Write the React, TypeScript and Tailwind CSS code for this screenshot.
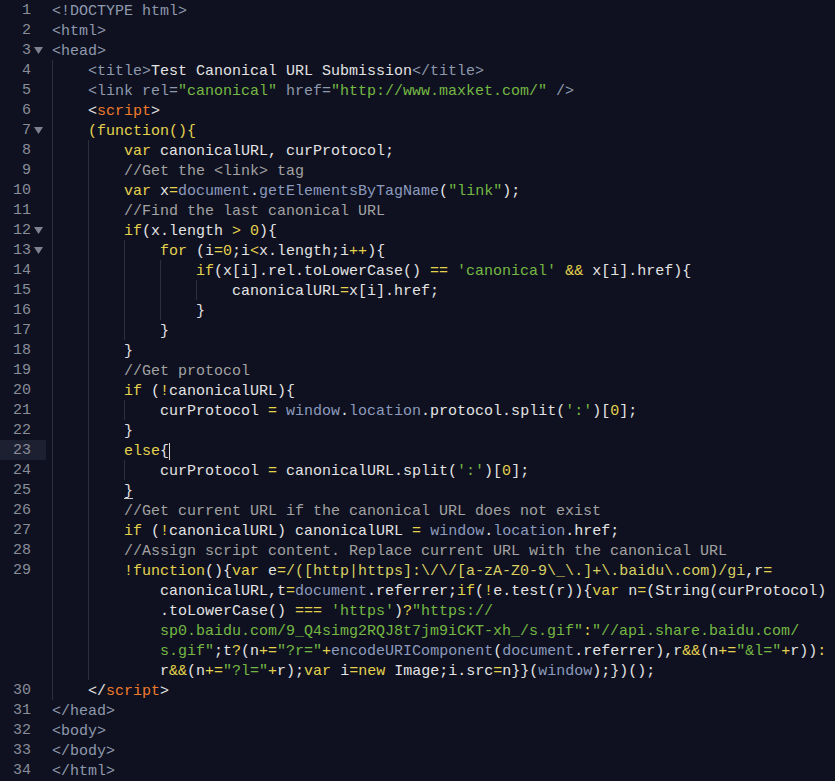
import React from "react";

type Seg = [string, keyof typeof COLORS];

type Row = {
  num?: number;
  fold?: boolean;
  guides: number;
  pad?: number;
  segs: Seg[];
  active?: boolean;
};

const COLORS = {
  p: "text-[#e3e3e3]",
  k: "text-[#e4d24e]",
  s: "text-[#74b843]",
  c: "text-[#a2a2a2]",
  t: "text-[#8e99ad]",
  b: "text-[#8c9bbd]",
  o: "text-[#ee7b2c]",
  r: "text-[#d8cf62]",
};

const rows: Row[] = [
  { num: 1, guides: 0, segs: [["<!DOCTYPE html>", "t"]] },
  { num: 2, guides: 0, segs: [["<html>", "t"]] },
  { num: 3, fold: true, guides: 0, segs: [["<head>", "t"]] },
  {
    num: 4,
    guides: 1,
    segs: [
      ["<title>", "t"],
      ["Test Canonical URL Submission", "p"],
      ["</title>", "t"],
    ],
  },
  {
    num: 5,
    guides: 1,
    segs: [
      ["<link rel=", "t"],
      ['"canonical"', "s"],
      [" href=", "t"],
      ['"http://www.maxket.com/"', "s"],
      [" />", "t"],
    ],
  },
  {
    num: 6,
    guides: 1,
    segs: [
      ["<", "p"],
      ["script", "o"],
      [">", "p"],
    ],
  },
  { num: 7, fold: true, guides: 1, segs: [["(function(){", "k"]] },
  {
    num: 8,
    guides: 2,
    segs: [
      ["var", "k"],
      [" canonicalURL, curProtocol;", "p"],
    ],
  },
  { num: 9, guides: 2, segs: [["//Get the <link> tag", "c"]] },
  {
    num: 10,
    guides: 2,
    segs: [
      ["var", "k"],
      [" x", "p"],
      ["=", "k"],
      ["document", "b"],
      [".", "p"],
      ["getElementsByTagName", "b"],
      ["(", "p"],
      ['"link"', "s"],
      [");", "p"],
    ],
  },
  { num: 11, guides: 2, segs: [["//Find the last canonical URL", "c"]] },
  {
    num: 12,
    fold: true,
    guides: 2,
    segs: [
      ["if", "k"],
      ["(x.length ", "p"],
      [">", "k"],
      [" ", "p"],
      ["0", "k"],
      ["){", "p"],
    ],
  },
  {
    num: 13,
    fold: true,
    guides: 3,
    segs: [
      ["for", "k"],
      [" (i", "p"],
      ["=", "k"],
      ["0", "k"],
      [";i", "p"],
      ["<", "k"],
      ["x.length;i", "p"],
      ["++", "k"],
      ["){", "p"],
    ],
  },
  {
    num: 14,
    guides: 4,
    segs: [
      ["if", "k"],
      ["(x[i].rel.toLowerCase() ", "p"],
      ["==", "k"],
      [" ", "p"],
      ["'canonical'", "s"],
      [" ", "p"],
      ["&&", "k"],
      [" x[i].href){", "p"],
    ],
  },
  {
    num: 15,
    guides: 5,
    segs: [
      ["canonicalURL", "p"],
      ["=", "k"],
      ["x[i].href;", "p"],
    ],
  },
  { num: 16, guides: 4, segs: [["}", "p"]] },
  { num: 17, guides: 3, segs: [["}", "p"]] },
  { num: 18, guides: 2, segs: [["}", "p"]] },
  { num: 19, guides: 2, segs: [["//Get protocol", "c"]] },
  {
    num: 20,
    guides: 2,
    segs: [
      ["if", "k"],
      [" (", "p"],
      ["!", "k"],
      ["canonicalURL){", "p"],
    ],
  },
  {
    num: 21,
    guides: 3,
    segs: [
      ["curProtocol ", "p"],
      ["=", "k"],
      [" ", "p"],
      ["window", "b"],
      [".", "p"],
      ["location", "b"],
      [".protocol.split(", "p"],
      ["':'", "s"],
      [")[", "p"],
      ["0", "k"],
      ["];", "p"],
    ],
  },
  { num: 22, guides: 2, segs: [["}", "p"]] },
  {
    num: 23,
    guides: 2,
    active: true,
    segs: [
      ["else", "k"],
      ["{", "p"],
    ],
  },
  {
    num: 24,
    guides: 3,
    segs: [
      ["curProtocol ", "p"],
      ["=", "k"],
      [" canonicalURL.split(", "p"],
      ["':'", "s"],
      [")[", "p"],
      ["0", "k"],
      ["];", "p"],
    ],
  },
  { num: 25, guides: 2, segs: [["}", "p"]] },
  {
    num: 26,
    guides: 2,
    segs: [["//Get current URL if the canonical URL does not exist", "c"]],
  },
  {
    num: 27,
    guides: 2,
    segs: [
      ["if", "k"],
      [" (", "p"],
      ["!", "k"],
      ["canonicalURL) canonicalURL ", "p"],
      ["=", "k"],
      [" ", "p"],
      ["window", "b"],
      [".", "p"],
      ["location", "b"],
      [".href;", "p"],
    ],
  },
  {
    num: 28,
    guides: 2,
    segs: [
      [
        "//Assign script content. Replace current URL with the canonical URL",
        "c",
      ],
    ],
  },
  {
    num: 29,
    guides: 2,
    segs: [
      ["!function", "k"],
      ["(){", "p"],
      ["var", "k"],
      [" e", "p"],
      ["=", "k"],
      ["/([http|https]:\\/\\/[a-zA-Z0-9\\_\\.]+\\.baidu\\.com)/gi", "r"],
      [",r", "p"],
      ["=", "k"],
    ],
  },
  {
    guides: 2,
    pad: 1,
    segs: [
      ["canonicalURL,t", "p"],
      ["=", "k"],
      ["document", "b"],
      [".referrer;", "p"],
      ["if", "k"],
      ["(", "p"],
      ["!", "k"],
      ["e.test(r)){", "p"],
      ["var", "k"],
      [" n", "p"],
      ["=", "k"],
      ["(String(curProtocol)", "p"],
    ],
  },
  {
    guides: 2,
    pad: 1,
    segs: [
      [".toLowerCase() ", "p"],
      ["===", "k"],
      [" ", "p"],
      ["'https'", "s"],
      [")", "p"],
      ["?", "k"],
      ['"https://', "s"],
    ],
  },
  {
    guides: 2,
    pad: 1,
    segs: [
      ['sp0.baidu.com/9_Q4simg2RQJ8t7jm9iCKT-xh_/s.gif"', "s"],
      [":", "k"],
      ['"//api.share.baidu.com/', "s"],
    ],
  },
  {
    guides: 2,
    pad: 1,
    segs: [
      ['s.gif"', "s"],
      [";t", "p"],
      ["?", "k"],
      ["(n", "p"],
      ["+=", "k"],
      ['"?r="', "s"],
      ["+", "k"],
      ["encodeURIComponent", "b"],
      ["(", "p"],
      ["document", "b"],
      [".referrer),r", "p"],
      ["&&", "k"],
      ["(n", "p"],
      ["+=", "k"],
      ['"&l="', "s"],
      ["+", "k"],
      ["r))", "p"],
      [":", "k"],
    ],
  },
  {
    guides: 2,
    pad: 1,
    segs: [
      ["r", "p"],
      ["&&", "k"],
      ["(n", "p"],
      ["+=", "k"],
      ['"?l="', "s"],
      ["+", "k"],
      ["r);", "p"],
      ["var", "k"],
      [" i", "p"],
      ["=", "k"],
      ["new", "k"],
      [" Image;i.src", "p"],
      ["=", "k"],
      ["n}}(", "p"],
      ["window", "b"],
      [");})();", "p"],
    ],
  },
  {
    num: 30,
    guides: 1,
    segs: [
      ["</", "p"],
      ["script", "o"],
      [">", "p"],
    ],
  },
  { num: 31, guides: 0, segs: [["</head>", "t"]] },
  { num: 32, guides: 0, segs: [["<body>", "t"]] },
  { num: 33, guides: 0, segs: [["</body>", "t"]] },
  { num: 34, guides: 0, segs: [["</html>", "t"]] },
];

function FoldArrow() {
  return (
    <svg width="9" height="7" viewBox="0 0 9 7" className="ml-[3px]">
      <polygon points="0,0 9,0 4.5,7" fill="#7d828e" />
    </svg>
  );
}

function CodeRow({ row }: { row: Row }) {
  const guides = Array.from({ length: row.guides });
  const pads = Array.from({ length: row.pad ?? 0 });

  return (
    <div className="flex h-[20px] leading-[20px] pt-[2px]">
      <div
        className={`flex items-center w-[46px] shrink-0 -mt-[2px] ${
          row.active ? "bg-[#1d2030]" : ""
        }`}
      >
        <span className="w-[31px] text-right text-[#888d99] pt-[2px]">
          {row.num ?? ""}
        </span>
        {row.fold && <FoldArrow />}
      </div>
      <div className="flex pl-[6px] whitespace-pre -mt-[2px]">
        {guides.map((_, i) => (
          <span
            key={`g${i}`}
            className="inline-block w-[36px] h-[20px] border-l border-[#2a2e3d]"
          />
        ))}
        {pads.map((_, i) => (
          <span key={`p${i}`} className="inline-block w-[36px] h-[20px]" />
        ))}
        <span className="pt-[2px]">
          {row.segs.map(([text, kind], i) => {
            const matched = row.num === 25 && text === "}";
            return (
              <span
                key={i}
                className={`${COLORS[kind]} ${
                  matched
                    ? "underline decoration-[#c8c8c8] underline-offset-[3px]"
                    : ""
                }`}
              >
                {text}
              </span>
            );
          })}
        </span>
        {row.active && (
          <span className="inline-block w-[1px] h-[17px] mt-[3px] bg-[#d8d8d8]" />
        )}
      </div>
    </div>
  );
}

export default function App() {
  return (
    <div className="w-[835px] h-[781px] overflow-hidden bg-[#0f1120] font-['Liberation_Mono',monospace] text-[15px]">
      {rows.map((row, i) => (
        <CodeRow key={i} row={row} />
      ))}
    </div>
  );
}
